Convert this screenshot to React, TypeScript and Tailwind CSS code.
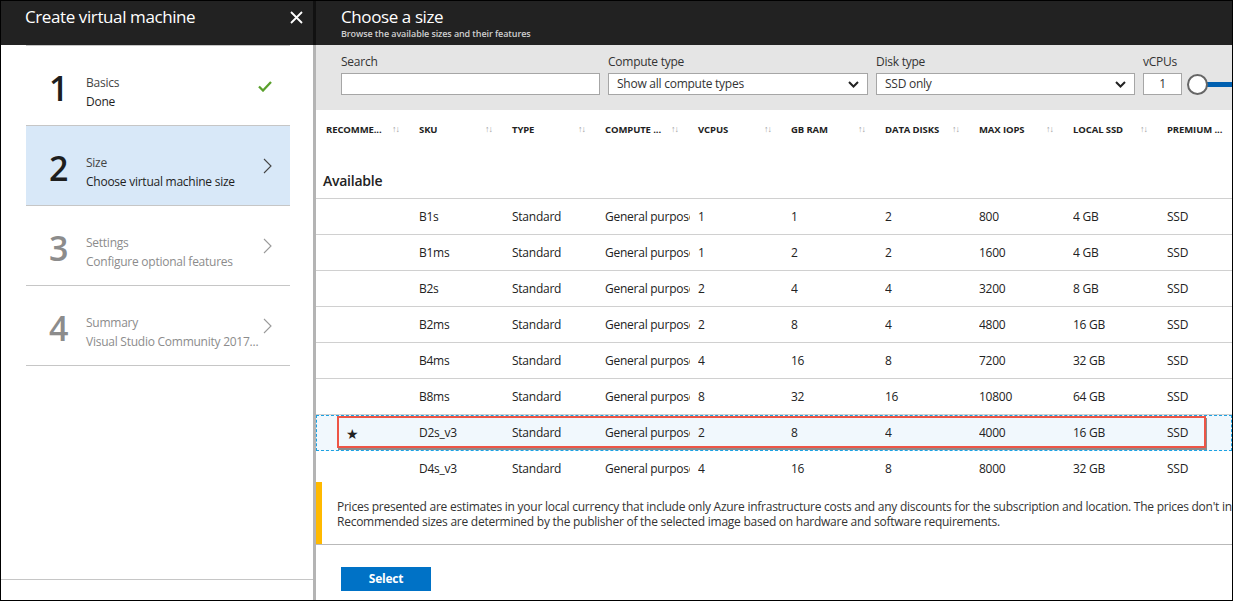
import React from "react"

const font = { fontFamily: '"Segoe UI", "Open Sans", "Noto Sans", sans-serif' }

const cols = [
  { label: "RECOMME...", w: "w-[93px]" },
  { label: "SKU", w: "w-[93px]" },
  { label: "TYPE", w: "w-[93px]" },
  { label: "COMPUTE ...", w: "w-[93px]" },
  { label: "VCPUS", w: "w-[93px]" },
  { label: "GB RAM", w: "w-[94px]" },
  { label: "DATA DISKS", w: "w-[94px]" },
  { label: "MAX IOPS", w: "w-[94px]" },
  { label: "LOCAL SSD", w: "w-[94px]" },
  { label: "PREMIUM ...", w: "w-[94px]" },
]

const rows = [
  ["", "B1s", "Standard", "General purpose", "1", "1", "2", "800", "4 GB", "SSD"],
  ["", "B1ms", "Standard", "General purpose", "1", "2", "2", "1600", "4 GB", "SSD"],
  ["", "B2s", "Standard", "General purpose", "2", "4", "4", "3200", "8 GB", "SSD"],
  ["", "B2ms", "Standard", "General purpose", "2", "8", "4", "4800", "16 GB", "SSD"],
  ["", "B4ms", "Standard", "General purpose", "4", "16", "8", "7200", "32 GB", "SSD"],
  ["", "B8ms", "Standard", "General purpose", "8", "32", "16", "10800", "64 GB", "SSD"],
  ["★", "D2s_v3", "Standard", "General purpose", "2", "8", "4", "4000", "16 GB", "SSD"],
  ["", "D4s_v3", "Standard", "General purpose", "4", "16", "8", "8000", "32 GB", "SSD"],
]

const steps = [
  { n: "1", title: "Basics", sub: "Done", state: "done" },
  { n: "2", title: "Size", sub: "Choose virtual machine size", state: "active" },
  { n: "3", title: "Settings", sub: "Configure optional features", state: "todo" },
  { n: "4", title: "Summary", sub: "Visual Studio Community 2017...", state: "todo" },
]

function Chevron({ className }: { className?: string }) {
  return (
    <svg width="9" height="16" viewBox="0 0 9 16" className={className}>
      <polyline points="1,1 8,8 1,15" fill="none" stroke="currentColor" strokeWidth="1.1" />
    </svg>
  )
}

function ChevronDown() {
  return (
    <svg width="11" height="7" viewBox="0 0 11 7">
      <polyline points="1,1 5.5,5.5 10,1" fill="none" stroke="#222" strokeWidth="2" />
    </svg>
  )
}

function Select({ value, w }: { value: string; w: string }) {
  return (
    <div className={`${w} h-[22px] bg-white border border-[#a6a6a6] flex items-center justify-between pl-[8px] pr-[8px] text-[12px] text-[#333]`}>
      <span>{value}</span>
      <ChevronDown />
    </div>
  )
}

export default function App() {
  return (
    <div className="w-[1233px] h-[601px] border border-black flex overflow-hidden bg-white tracking-[-0.25px]" style={font}>
      {/* left blade */}
      <div className="w-[312px] shrink-0 flex flex-col">
        <div className="h-[44px] bg-[#222222] flex items-start justify-between pl-[24px] pr-[10px] pt-[5px]">
          <span className="text-[17px] text-white leading-[22px] tracking-[-0.4px]">Create virtual machine</span>
          <svg width="13" height="13" viewBox="0 0 13 13" className="mt-[5px]">
            <path d="M1 1 L12 12 M12 1 L1 12" stroke="white" strokeWidth="1.8" />
          </svg>
        </div>
        <div className="flex-1 pl-[25px] pr-[23px]">
          <div className="border-t border-[#c6c6c6]">
            {steps.map((s) => {
              const gray = s.state === "todo"
              return (
                <div
                  key={s.n}
                  className={`h-[80px] border-b border-[#c6c6c6] flex items-center pl-[23px] pr-[18px] ${
                    s.state === "active" ? "bg-[#d8e8f8]" : ""
                  }`}
                >
                  <div className={`w-[37px] mt-[4px] text-[34px] font-semibold leading-none ${gray ? "text-[#8c8c8c]" : "text-[#1e1e1e]"}`}>
                    {s.n}
                  </div>
                  <div className="flex-1 min-w-0 mt-[14px] flex flex-col gap-[3px] text-[12px] leading-[16px] whitespace-nowrap">
                    <span className={gray ? "text-[#8c8c8c]" : "text-[#444]"}>{s.title}</span>
                    <span className={gray ? "text-[#8c8c8c]" : "text-[#1e1e1e]"}>{s.sub}</span>
                  </div>
                  {s.state === "done" ? (
                    <svg width="14" height="11" viewBox="0 0 14 11" className="shrink-0 mt-[2px]">
                      <polyline points="1,5.5 5,9.5 13,1" fill="none" stroke="#5aa02c" strokeWidth="2.3" />
                    </svg>
                  ) : (
                    <Chevron className={`shrink-0 ${gray ? "text-[#9a9a9a]" : "text-[#444]"}`} />
                  )}
                </div>
              )
            })}
          </div>
        </div>
        <div className="h-[21px] border-t border-[#c6c6c6]" />
      </div>

      {/* divider */}
      <div className="w-[3px] shrink-0 flex flex-col">
        <div className="h-[44px] bg-[#111]" />
        <div className="flex-1 bg-[#b4b4b4]" />
      </div>

      {/* right blade */}
      <div className="flex-1 flex flex-col min-w-0">
        <div className="h-[44px] bg-[#222222] pl-[25px] pt-[5px] shrink-0">
          <div className="text-[17px] text-white leading-[22px] tracking-[-0.4px]">Choose a size</div>
          <div className="text-[9px] font-semibold text-[#cfcfcf] leading-[12px] tracking-[-0.1px]">Browse the available sizes and their features</div>
        </div>

        {/* filters */}
        <div className="h-[65px] bg-[#e5e5e5] pl-[25px] pt-[9px] flex gap-[8px] shrink-0 overflow-hidden">
          <div className="flex flex-col gap-[3px]">
            <span className="text-[12px] text-[#333] leading-[16px]">Search</span>
            <div className="w-[259px] h-[22px] bg-white border border-[#a6a6a6]" />
          </div>
          <div className="flex flex-col gap-[3px]">
            <span className="text-[12px] text-[#333] leading-[16px]">Compute type</span>
            <Select value="Show all compute types" w="w-[260px]" />
          </div>
          <div className="flex flex-col gap-[3px]">
            <span className="text-[12px] text-[#333] leading-[16px]">Disk type</span>
            <Select value="SSD only" w="w-[259px]" />
          </div>
          <div className="flex flex-col gap-[3px]">
            <span className="text-[12px] text-[#333] leading-[16px]">vCPUs</span>
            <div className="flex items-center">
              <div className="w-[39px] h-[22px] bg-white border border-[#a6a6a6] text-[12px] text-[#333] flex items-center justify-center">1</div>
              <div className="ml-[5px] w-[21px] h-[21px] rounded-full border-2 border-[#666] bg-white z-10" />
              <div className="w-[40px] h-[5px] bg-[#0060b0] -ml-[2px]" />
            </div>
          </div>
        </div>

        {/* table header */}
        <div className="h-[41px] flex items-center pl-[10px] shrink-0 overflow-hidden">
          {cols.map((c) => (
            <div key={c.label} className={`${c.w} shrink-0 flex items-center justify-between gap-[3px] pr-[20px]`}>
              <span className="text-[9.5px] font-bold text-[#222] whitespace-nowrap tracking-[-0.1px]">{c.label}</span>
              <span className="shrink-0 text-[9px] text-[#a0a0a0] tracking-[-1px] -mt-[3px]">↑↓</span>
            </div>
          ))}
        </div>

        <div className="h-[48px] flex items-end pb-[7px] pl-[7px] shrink-0 border-b border-[#d0d0d0]">
          <span className="text-[14px] font-semibold text-[#222]">Available</span>
        </div>

        {/* rows */}
        <div className="h-[283px] overflow-hidden shrink-0">
          {rows.map((r, i) => {
            const sel = i === 6
            return (
              <div
                key={r[1]}
                className={`relative h-[36px] flex items-center pl-[10px] text-[12px] text-[#222] ${
                  sel
                    ? "bg-[#f1f8fd] outline-1 outline-dashed outline-[#1ba1e2] -outline-offset-1"
                    : "border-b border-[#d0d0d0]"
                }`}
              >
                {r.map((v, j) => (
                  <div key={j} className={`${cols[j].w} shrink-0 ${j === 3 ? "pr-[8px]" : "pr-[9px]"}`}>
                    <div className={`overflow-hidden whitespace-nowrap ${j === 0 ? "pl-[20px] text-[14px]" : ""}`}>{v}</div>
                  </div>
                ))}
                {sel && (
                  <div className="absolute left-[21px] right-[26px] top-[1px] h-[32px] border-2 border-[#ee5546] shadow-[1px_2px_0_#8c8c8c]" />
                )}
              </div>
            )
          })}
        </div>

        {/* notice */}
        <div className="h-[63px] flex border-b border-[#b9b9b9] shrink-0">
          <div className="w-[6px] bg-[#ffb900] shrink-0" />
          <div className="pl-[15px] pt-[17px] text-[12px] leading-[15px] text-[#333] whitespace-nowrap overflow-hidden">
            <div>
              Prices presented are estimates in your local currency that include only Azure infrastructure costs and any discounts for the subscription and location. The prices don't include software costs.
            </div>
            <div>Recommended sizes are determined by the publisher of the selected image based on hardware and software requirements.</div>
          </div>
        </div>

        <div className="pl-[25px] pt-[20px]">
          <button className="w-[90px] h-[24px] bg-[#0072c6] text-white text-[12px] font-bold">Select</button>
        </div>
      </div>
    </div>
  )
}
